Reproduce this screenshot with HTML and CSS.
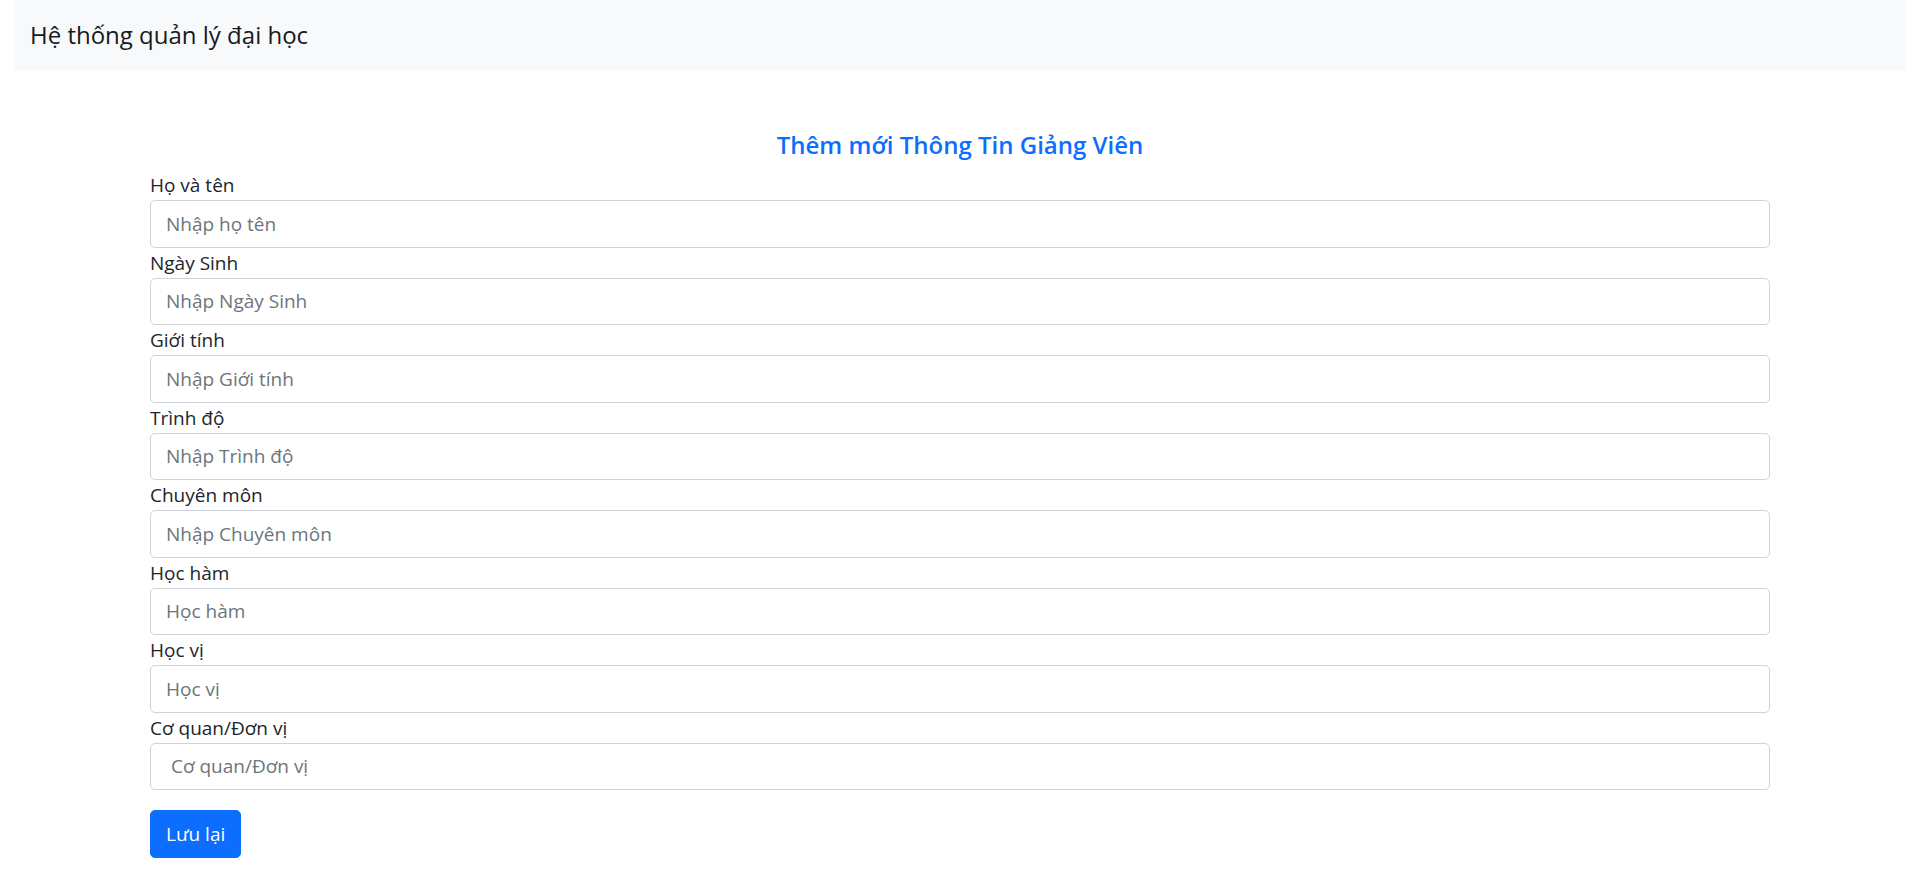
FILE: index.html
```html
<!DOCTYPE html>
<html lang="vi">
<head>
<meta charset="utf-8">
<meta name="viewport" content="width=device-width, initial-scale=1">
<title>Hệ thống quản lý đại học</title>
<link rel="stylesheet" href="styles.css">
</head>
<body>
<header class="navbar"><a class="brand" href="#">Hệ thống quản lý đại học</a></header>
<main class="content">
<h1 class="title">Thêm mới Thông Tin Giảng Viên</h1>
<form>
<div class="fields">
<div class="field"><label for="name">Họ và tên</label><input id="name" type="text" placeholder="Nhập họ tên"></div>
<div class="field"><label for="birth">Ngày Sinh</label><input id="birth" type="text" placeholder="Nhập Ngày Sinh"></div>
<div class="field"><label for="gender">Giới tính</label><input id="gender" type="text" placeholder="Nhập Giới tính"></div>
<div class="field"><label for="level">Trình độ</label><input id="level" type="text" placeholder="Nhập Trình độ"></div>
<div class="field"><label for="major">Chuyên môn</label><input id="major" type="text" placeholder="Nhập Chuyên môn"></div>
<div class="field"><label for="rank">Học hàm</label><input id="rank" type="text" placeholder="Học hàm"></div>
<div class="field"><label for="degree">Học vị</label><input id="degree" type="text" placeholder="Học vị"></div>
<div class="field"><label for="unit">Cơ quan/Đơn vị</label><input id="unit" type="text" placeholder=" Cơ quan/Đơn vị"></div>
</div>
<button class="save" type="submit">Lưu lại</button>
</form>
</main>
</body>
</html>
```
FILE: styles.css
```css
* {
  box-sizing: border-box;
}

body {
  margin: 0;
  padding: 0 15px;
  background: #fff;
  color: #212529;
  font-family: "Segoe UI", "Open Sans", "Noto Sans", sans-serif;
  font-size: 19px;
  line-height: 30px;
}

.navbar {
  display: flex;
  align-items: center;
  min-height: 70px;
  padding: 0 15px;
  background: #f8f9fa;
}

.brand {
  color: #191a1b;
  font-size: 24px;
  text-decoration: none;
}

.content {
  padding: 60px 135px 20px;
}

.title {
  margin: 0 0 10px;
  color: #0d6efd;
  font-size: 24px;
  font-weight: 600;
  line-height: 30px;
  text-align: center;
}

.fields {
  display: grid;
  grid-auto-rows: 1fr;
  min-height: 620px;
}

.field {
  display: flex;
  flex-direction: column;
}

.field label {
  align-self: flex-start;
}

.field input {
  flex: 1;
  width: 100%;
  padding: 0 15px;
  border: 1px solid #ced4da;
  border-radius: 5px;
  background: #fff;
  color: #212529;
  font: inherit;
}

.field input::placeholder {
  color: #6c757d;
  opacity: 1;
}

.save {
  display: block;
  min-width: 90px;
  margin: 20px 0 0;
  padding: 8px 15px;
  border: 1px solid #0d6efd;
  border-radius: 5px;
  background: #0d6efd;
  color: #fff;
  font: inherit;
}
```
